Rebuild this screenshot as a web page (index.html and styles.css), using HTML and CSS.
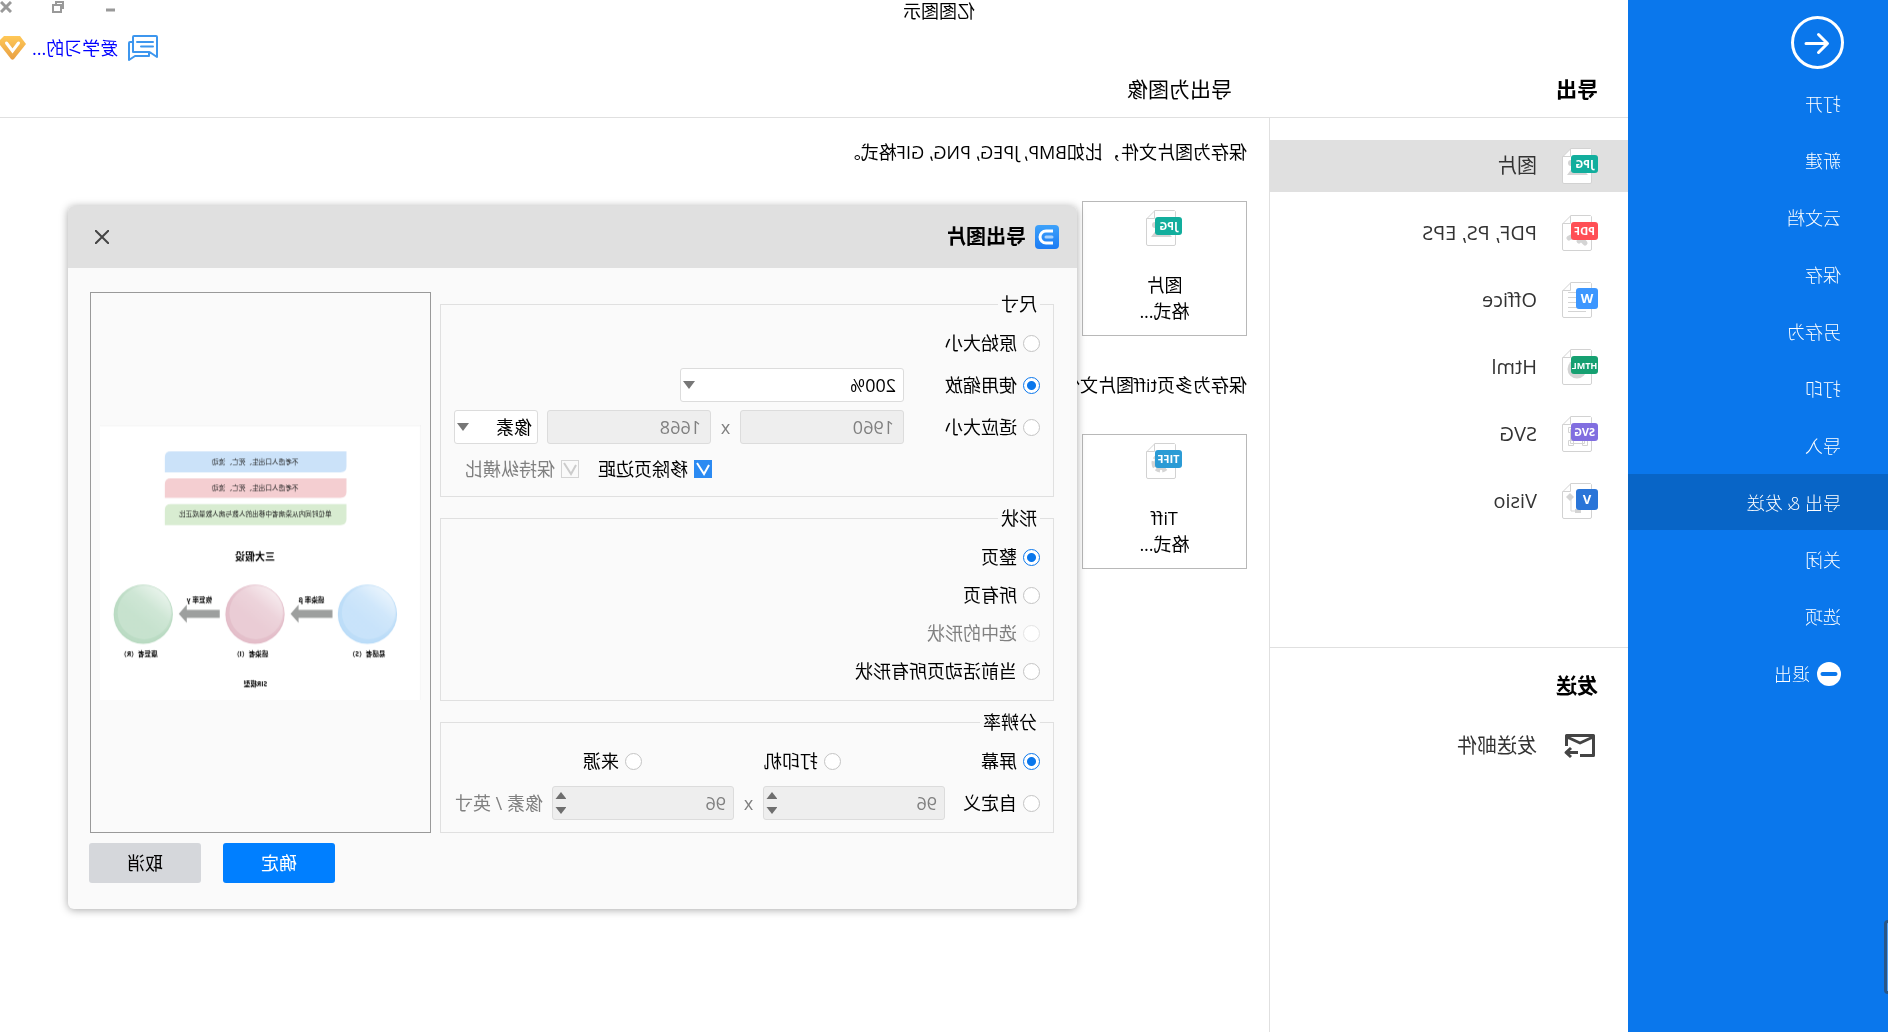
FILE: index.html
```html
<!DOCTYPE html>
<html lang="zh-CN">
<head>
<meta charset="utf-8">
<meta name="viewport" content="width=device-width, initial-scale=1">
<title>亿图图示</title>
<link rel="stylesheet" href="styles.css">
</head>
<body>
<svg class="sprite" aria-hidden="true">
  <symbol id="sheet" viewBox="0 0 36 36">
    <path d="M7.5.5H27L35.500 9V34a1.500 1.500 0 0 1-1.500 1.500H8A1.500 1.500 0 0 1 6.500 34V1.500z" fill="#fff" stroke="#d2d2d2"/>
    <path d="M27.500.5V8.500H35.500" fill="none" stroke="#d2d2d2"/>
  </symbol>
  <symbol id="picture" viewBox="0 0 36 36">
    <use href="#sheet"/>
    <circle cx="27" cy="15" r="3" fill="#d4d4d4"/><path d="M10 27l8-9 4 4 3-3 6 8z" fill="#d4d4d4"/>
    <rect y="7" width="27" height="18" rx="3" fill="#12ae9d"/>
  </symbol>
</svg>

<div class="app">
  <nav class="sidebar">
    <button class="back" aria-label="返回">
      <svg width="53" height="53" viewBox="0 0 53 53" fill="none" stroke="#fff"><circle cx="26.500" cy="26.500" r="25" stroke-width="3"/><path d="M38 27.500H17M25.500 18.500l-9 9 9 9" stroke-width="3" stroke-linecap="round" stroke-linejoin="round"/></svg>
    </button>
    <a href="#">打开</a>
    <a href="#">新建</a>
    <a href="#">云文档</a>
    <a href="#">保存</a>
    <a href="#">另存为</a>
    <a href="#">打印</a>
    <a href="#">导入</a>
    <a href="#" class="active">导出 &amp; 发送</a>
    <a href="#">关闭</a>
    <a href="#">选项</a>
    <a href="#"><svg width="24" height="24" viewBox="0 0 24 24"><circle cx="12" cy="12" r="12" fill="#fff"/><path d="M5.500 12h13" stroke="#0a77ec" stroke-width="4" stroke-linecap="round"/></svg>退出</a>
    <span class="edge-handle"></span>
  </nav>

  <div class="main">
    <header class="header">
      <div class="titlebar">
        <span class="window-title">亿图图示</span>
        <div class="window-controls">
          <button aria-label="最小化"><svg width="12" height="12"><path d="M1 9h9" stroke="#999" stroke-width="3"/></svg></button>
          <button aria-label="还原"><svg width="12" height="12" fill="none" stroke="#999" stroke-width="2"><path d="M3 4h8v7H3z"/><path d="M3 7H1V1h7v3"/></svg></button>
          <button aria-label="关闭窗口"><svg width="12" height="12"><path d="M1 1l10 10M11 1L1 11" stroke="#999" stroke-width="3"/></svg></button>
        </div>
      </div>
      <div class="userbar">
        <svg width="30" height="26" viewBox="0 0 30 26" fill="none" stroke="#3d96ee" stroke-width="2" stroke-linejoin="round" stroke-linecap="round"><path d="M2 1h22q1 0 1 1v15H9l-2 1-6 4V2q0-1 1-1z"/><path d="M25 7h3q1 0 1 1v17l-6-4H9v-3M5 7h16M5 11.500h12"/></svg>
        <a href="#">爱学习的...</a>
        <svg width="26" height="24" viewBox="0 0 26 24"><defs><linearGradient id="gold" x2="0" y2="1"><stop stop-color="#ffc857"/><stop offset="1" stop-color="#e89f43"/></linearGradient></defs><path d="M6 0h16l4 4v5L15 23q-1.500 1.500-3 0L0 8z" fill="url(#gold)"/><path d="M7.500 7l6 8 6-8" fill="none" stroke="#fff" stroke-width="3" stroke-linecap="round"/></svg>
      </div>
      <div class="headings">
        <h1>导出</h1>
        <h2>导出为图像</h2>
      </div>
    </header>

    <div class="columns">
      <aside class="options">
        <section class="formats">
          <a href="#" class="row selected"><svg width="36" height="36" viewBox="0 0 36 36"><use href="#picture"/><text x="13.500" y="20" class="badge">JPG</text></svg>图片</a>
          <a href="#" class="row"><svg width="36" height="36" viewBox="0 0 36 36"><use href="#sheet"/><path d="M13 28q8-10 16-5M14 20l5 6" stroke="#d4d4d4" stroke-width="5" stroke-linecap="round" fill="none"/><rect y="7" width="27" height="18" rx="3" fill="#ff4f55"/><text x="13.500" y="20" class="badge">PDF</text></svg>PDF, PS, EPS</a>
          <a href="#" class="row"><svg width="36" height="36" viewBox="0 0 36 36"><use href="#sheet"/><path d="M14 10.500h16M14 15.500h16M14 20.500h16M14 25.500h16M12 29.500h18" stroke="#d4d4d4"/><rect y="6" width="22" height="21" rx="3" fill="#3d97ff"/><text x="11" y="21" class="badge letter">W</text></svg>Office</a>
          <a href="#" class="row"><svg width="36" height="36" viewBox="0 0 36 36"><use href="#sheet"/><circle cx="21" cy="20" r="9.500" fill="#d4d4d4"/><rect y="7" width="27" height="18" rx="3" fill="#16a071"/><text x="13.500" y="20" class="badge narrow">HTML</text></svg>Html</a>
          <a href="#" class="row"><svg width="36" height="36" viewBox="0 0 36 36"><use href="#sheet"/><path d="M13.500 13.500h14v14h-14zM10.500 24.500h5v5h-5zM24.500 24.500h5v5h-5zM24.500 11.500h5v5h-5z" fill="#fff" stroke="#d4d4d4"/><rect y="7" width="27" height="18" rx="3" fill="#816ee0"/><text x="13.500" y="20" class="badge">SVG</text></svg>SVG</a>
          <a href="#" class="row"><svg width="36" height="36" viewBox="0 0 36 36"><use href="#sheet"/><path d="M20 28h7V14" stroke="#d4d4d4" fill="none"/><path d="M28 10l4 4-4 4-4-4zM17 26h6v4h-6z" fill="#d4d4d4"/><rect y="6" width="22" height="21" rx="3" fill="#2a75d8"/><text x="11" y="21" class="badge letter">V</text></svg>Visio</a>
        </section>
        <section class="send">
          <h2>发送</h2>
          <a href="#" class="row"><svg width="36" height="36" viewBox="0 0 36 36" fill="none" stroke="#444" stroke-width="3" stroke-linejoin="round"><path d="M18 27.500H4.500V7.500H31.500V18M5 9l13 6 13-6"/><path d="M20 24.500H31M27 20l5 4.500-5 4.500"/></svg>发送邮件</a>
        </section>
      </aside>

      <main class="content">
        <p>保存为图片文件，比如BMP, JPEG, PNG, GIF格式。</p>
        <button class="card"><svg width="36" height="36" viewBox="0 0 36 36"><use href="#picture"/><text x="13.500" y="20" class="badge">JPG</text></svg><span>图片<br>格式...</span></button>
        <p>保存为多页tiff图片文件。</p>
        <button class="card"><svg width="36" height="36" viewBox="0 0 36 36"><use href="#sheet"/><circle cx="21" cy="20" r="7" fill="none" stroke="#d4d4d4" stroke-width="5" stroke-dasharray="4 2"/><circle cx="21" cy="20" r="7" fill="#d4d4d4"/><rect y="7" width="27" height="18" rx="3" fill="#2b9bd5"/><text x="13.500" y="20" class="badge">TIFF</text></svg><span>Tiff<br>格式...</span></button>
      </main>
    </div>
  </div>

  <form class="dialog" role="dialog" aria-labelledby="dialog-title">
    <header class="dialog-header">
      <svg width="24" height="24" viewBox="0 0 24 24" fill="none" stroke-width="3"><defs><linearGradient id="logo" x2="0" y2="1"><stop stop-color="#3ea2fa"/><stop offset="1" stop-color="#1b7bf4"/></linearGradient></defs><rect width="24" height="24" rx="4" fill="url(#logo)"/><path d="M6 6h7a6 6 0 0 1 0 12H6" stroke="#fff"/><path d="M7 12h6" stroke="#a9d2fc" stroke-linecap="round"/></svg>
      <h2 id="dialog-title">导出图片</h2>
      <button type="button" class="close" aria-label="关闭"><svg width="14" height="14"><path d="M0 0l14 14M14 0L0 14" stroke="#444" stroke-width="2"/></svg></button>
    </header>

    <div class="dialog-body">
      <div class="groups">
        <fieldset class="size">
          <legend>尺寸</legend>
          <div class="line"><label class="pick"><input type="radio" name="size">原始大小</label></div>
          <div class="line">
            <label class="pick lead"><input type="radio" name="size" checked>使用缩放</label>
            <select class="zoom" aria-label="缩放比例"><option>200%</option></select>
          </div>
          <div class="line">
            <label class="pick lead"><input type="radio" name="size">适应大小</label>
            <input class="field" type="text" value="1960" aria-label="宽度" disabled>
            <span class="times">x</span>
            <input class="field" type="text" value="1668" aria-label="高度" disabled>
            <select class="unit" aria-label="单位"><option>像素</option></select>
          </div>
          <div class="line checks">
            <label class="pick"><input type="checkbox" checked>移除页边距</label>
            <label class="pick off"><input type="checkbox" checked disabled>保持纵横比</label>
          </div>
        </fieldset>

        <fieldset class="shape">
          <legend>形状</legend>
          <div class="line"><label class="pick"><input type="radio" name="shape" checked>整页</label></div>
          <div class="line"><label class="pick"><input type="radio" name="shape">所有页</label></div>
          <div class="line"><label class="pick off"><input type="radio" name="shape" disabled>选中的形状</label></div>
          <div class="line"><label class="pick"><input type="radio" name="shape">当前活动页所有形状</label></div>
        </fieldset>

        <fieldset class="dpi">
          <legend>分辨率</legend>
          <div class="line thirds">
            <label class="pick"><input type="radio" name="dpi" checked>屏幕</label>
            <label class="pick"><input type="radio" name="dpi">打印机</label>
            <label class="pick"><input type="radio" name="dpi">来源</label>
          </div>
          <div class="line">
            <label class="pick custom"><input type="radio" name="dpi">自定义</label>
            <span class="spin"><input type="number" value="96" aria-label="水平分辨率" disabled><i class="up"></i><i class="down"></i></span>
            <span class="times">x</span>
            <span class="spin"><input type="number" value="96" aria-label="垂直分辨率" disabled><i class="up"></i><i class="down"></i></span>
            <span class="per">像素 / 英寸</span>
          </div>
        </fieldset>
      </div>

      <div class="preview">
        <svg viewBox="0 0 965 829" role="img" aria-label="预览">
          <defs>
            <linearGradient id="shine" x1="0.100" y1="0.050" x2="0.550" y2="0.600"><stop stop-color="#fff" stop-opacity=".75"/><stop offset=".6" stop-color="#fff" stop-opacity=".18"/><stop offset="1" stop-color="#fff" stop-opacity=".05"/></linearGradient>
          </defs>
          <rect width="965" height="829" fill="#fff"/>
          <path d="M0 829V1H965" fill="none" stroke="#eee" stroke-width="3"/>
          <path d="M224 79h528q18 0 18 18v45H242q-18 0-18-18z" fill="#cbe2f9"/>
          <path d="M224 160h528q18 0 18 18v41H242q-18 0-18-18z" fill="#f4ced1"/>
          <path d="M224 238h528q18 0 18 18v45H242q-18 0-18-18z" fill="#d8ecd1"/>
          <text x="498" y="118">不考虑人口出生、死亡、流动</text>
          <text x="498" y="197">不考虑人口出生、死亡、流动</text>
          <text x="498" y="274">单位时间内从染病者中移出的人数与病人数量成正比</text>
          <text x="499" y="407" class="big">三大假设</text>
          <g>
            <circle cx="161" cy="569" r="89" fill="#badcf8"/><circle cx="158" cy="564" r="80" fill="#c6e2fa"/><circle cx="161" cy="567" r="86" fill="url(#shine)"/>
            <circle cx="499" cy="569" r="89" fill="#e3bcc8"/><circle cx="496" cy="564" r="80" fill="#e9cad3"/><circle cx="499" cy="567" r="86" fill="url(#shine)"/>
            <circle cx="835" cy="569" r="89" fill="#b8dac1"/><circle cx="832" cy="564" r="80" fill="#c4e1cc"/><circle cx="835" cy="567" r="86" fill="url(#shine)"/>
          </g>
          <path d="M266 556h102v-16l24 28-24 27v-15H266zM605 556h99v-16l24 28-24 27v-15h-99z" fill="#9d9f9e"/>
          <g class="strong">
            <text x="329" y="532">感染率 β</text>
            <text x="666" y="532">恢复率 γ</text>
            <text x="162" y="694">易感者（S）</text>
            <text x="512" y="694">感染者（I）</text>
            <text x="848" y="694">康复者（R）</text>
            <text x="498" y="787">SIR模型</text>
          </g>
        </svg>
      </div>
    </div>

    <footer class="dialog-footer">
      <button type="submit" class="ok">确定</button>
      <button type="button" class="cancel">取消</button>
    </footer>
  </form>
</div>
</body>
</html>
```
FILE: styles.css
```css
* { box-sizing: border-box; }

body {
  margin: 0;
  background: #fff;
  color: #000;
  font-family: "Open Sans", "Noto Sans CJK SC", sans-serif;
  font-size: 18px;
  line-height: 26px;
}

h1, h2, p { margin: 0; font-weight: 400; }
a { color: inherit; text-decoration: none; }
svg { display: block; flex: none; }
button, input, select { font: inherit; color: inherit; }
button { padding: 0; border: 0; background: none; cursor: pointer; }

.sprite { position: absolute; width: 0; height: 0; }

/* The whole interface runs as a mirror image. */
.app {
  position: relative;
  display: grid;
  grid-template-columns: 260px 1fr;
  min-height: 100vh;
  overflow: hidden;
  transform: scaleX(-1);
}

/* Sidebar */
.sidebar {
  position: relative;
  z-index: 1;
  display: flex;
  flex-direction: column;
  gap: 1px;
  padding-top: 16px;
  background: #0a77ec;
  color: #fff;
  font-weight: 300;
}
.back { align-self: flex-start; margin: 0 0 5px 44px; }
.sidebar a {
  display: flex;
  align-items: center;
  gap: 7px;
  height: 56px;
  padding: 2px 0 0 47px;
}
.sidebar .active { background: #0865c7; }
.edge-handle {
  position: absolute;
  left: 0;
  top: 920px;
  width: 4px;
  height: 74px;
  border: 3px solid #2a5685;
  border-left: 0;
  border-radius: 0 6px 6px 0;
  background: #4f9df0;
}

/* Header */
.main { display: flex; flex-direction: column; min-width: 0; }
.header { border-bottom: 1px solid #e0e0e0; }
.titlebar {
  display: grid;
  grid-template-columns: 1fr auto 1fr;
  height: 22px;
  margin-left: -250px;
}
.window-title { grid-column: 2; line-height: 22px; }
.window-controls {
  display: flex;
  justify-content: flex-end;
  align-items: flex-start;
  gap: 40px;
  padding-top: 1px;
}
.userbar {
  display: flex;
  justify-content: flex-end;
  align-items: center;
  height: 40px;
  padding-top: 12px;
}
.userbar a { margin: 0 6px 0 10px; color: #00f; }
.headings {
  display: grid;
  grid-template-columns: 366px 1fr;
  align-items: center;
  height: 55px;
  padding: 0 0 2px 30px;
  font-size: 21px;
}
.headings h1 { font-size: 21px; font-weight: 700; }
.headings h2 { font-size: 21px; }

/* Export format list */
.columns { flex: 1; display: grid; grid-template-columns: 358px 1fr; }
.formats {
  display: flex;
  flex-direction: column;
  gap: 15px;
  min-height: 529px;
  padding-top: 22px;
}
.row {
  display: flex;
  align-items: center;
  gap: 25px;
  height: 52px;
  padding-left: 30px;
  color: #333;
  font-size: 20px;
}
.selected { background: #e0e0e0; }
.badge {
  fill: #fff;
  font: 700 11px "Open Sans", sans-serif;
  text-anchor: middle;
}
.narrow { font-size: 9px; }
.letter { font-size: 13px; }
.send { padding-top: 22px; border-top: 1px solid #e0e0e0; }
.send h2 {
  margin-bottom: 20px;
  padding-left: 30px;
  font-size: 21px;
  font-weight: 700;
  line-height: 30px;
}

/* Export target cards */
.content {
  display: flex;
  flex-direction: column;
  align-items: flex-start;
  gap: 35px;
  padding: 20px 22px;
  border-left: 1px solid #e0e0e0;
}
.content p { line-height: 28px; }
.card {
  display: flex;
  flex-direction: column;
  align-items: center;
  gap: 26px;
  width: 165px;
  height: 135px;
  padding-top: 8px;
  border: 1px solid #b8b8b8;
}

/* Dialog */
.dialog {
  position: absolute;
  top: 206px;
  right: 68px;
  z-index: 2;
  width: 1009px;
  border-radius: 6px;
  background: #fafafa;
  box-shadow: 0 1px 8px rgba(0, 0, 0, .35);
}
.dialog-header {
  display: flex;
  align-items: center;
  gap: 9px;
  height: 62px;
  padding: 0 27px 0 18px;
  border-radius: 6px 6px 0 0;
  background: #e0e0e0;
}
.dialog-header h2 { font-size: 20px; font-weight: 700; }
.close { margin-left: auto; }
.dialog-body {
  display: grid;
  grid-template-columns: 1fr 341px;
  gap: 9px;
  padding: 24px 22px 0 23px;
}
.groups { display: flex; flex-direction: column; gap: 9px; min-width: 0; }

fieldset {
  display: flex;
  flex-direction: column;
  gap: 8px;
  min-width: 0;
  margin: 0;
  padding: 10px 13px;
  border: 1px solid #e0e0e0;
}
legend { padding: 0 3px; line-height: 24px; }
.size { height: 205px; }
.shape { height: 195px; gap: 4px; }
.dpi { height: 123px; }

.line { display: flex; align-items: center; height: 34px; }
.pick { display: flex; align-items: center; gap: 6px; white-space: nowrap; }
.lead { width: 136px; }
.custom { width: 95px; }
.thirds .pick { flex: none; width: 199px; }
.thirds .pick:last-child { width: auto; }
.checks { justify-content: flex-end; gap: 19px; padding-right: 11px; }
.off, .times, .per { color: #808080; }
.times { width: 29px; text-align: center; }
.per { margin-left: 9px; }

input[type="radio"] {
  appearance: none;
  width: 17px;
  height: 17px;
  margin: 0;
  border: 1px solid #c4c4c4;
  border-radius: 50%;
  background: #fff;
}
input[type="radio"]:checked {
  border-color: #0a77ec;
  background: radial-gradient(circle, #0a77ec 4px, #fff 5px);
}
input[type="radio"]:disabled { border-color: #e4e4e4; }

input[type="checkbox"] {
  appearance: none;
  width: 18px;
  height: 18px;
  margin: 0;
  border: 1px solid #2b8af2;
  background: #2b8af2 url("data:image/svg+xml,%3Csvg xmlns='http://www.w3.org/2000/svg' width='16' height='16'%3E%3Cpath d='M2 4l5 9 7-11' fill='none' stroke='%23fff' stroke-width='2'/%3E%3C/svg%3E") center no-repeat;
}
input[type="checkbox"]:disabled {
  border-color: #d4d4d4;
  background: #fafafa url("data:image/svg+xml,%3Csvg xmlns='http://www.w3.org/2000/svg' width='16' height='16'%3E%3Cpath d='M2 4l5 9 7-11' fill='none' stroke='%23ccc' stroke-width='2'/%3E%3C/svg%3E") center no-repeat;
}

select, .field, .spin {
  height: 34px;
  border: 1px solid #dcdcdc;
  border-radius: 3px;
}
select {
  appearance: none;
  padding: 0 0 0 7px;
  background: #fff url("data:image/svg+xml,%3Csvg xmlns='http://www.w3.org/2000/svg' width='12' height='8'%3E%3Cpath d='M0 0h12L6 8z' fill='%23777'/%3E%3C/svg%3E") right 2px center no-repeat;
}
.zoom { width: 224px; }
.unit { width: 84px; margin-left: 9px; padding-left: 5px; }
.field {
  width: 164px;
  padding: 0 9px;
  background: #eee;
  color: #808080;
}
.spin {
  display: grid;
  grid-template: 1fr 1fr / 1fr 12px;
  justify-items: center;
  row-gap: 8px;
  width: 182px;
  padding: 5px 2px 5px 7px;
  background: #eee;
}
.spin input {
  grid-row: 1 / 3;
  align-self: center;
  width: 100%;
  padding: 0;
  border: 0;
  background: none;
  color: #808080;
  appearance: textfield;
}
.up, .down { width: 11px; height: 7px; background: #6e6e6e; }
.up { align-self: end; clip-path: polygon(0 100%, 50% 0, 100% 100%); }
.down { clip-path: polygon(0 0, 100% 0, 50% 100%); }

.preview {
  display: flex;
  align-items: center;
  padding: 0 9px;
  border: 1px solid #999;
}
.preview svg { width: 100%; }
.preview text { font-size: 20px; text-anchor: middle; fill: #222; }
.preview .strong text { font-weight: 700; fill: #000; }
.preview .big { font-size: 30px; font-weight: 700; fill: #000; }

.dialog-footer {
  display: flex;
  justify-content: flex-end;
  gap: 22px;
  padding: 10px 21px 26px;
}
.dialog-footer button { width: 112px; height: 40px; border-radius: 3px; }
.ok { background: #007fff; color: #fff; }
.cancel { background: #d5d7db; }
```
